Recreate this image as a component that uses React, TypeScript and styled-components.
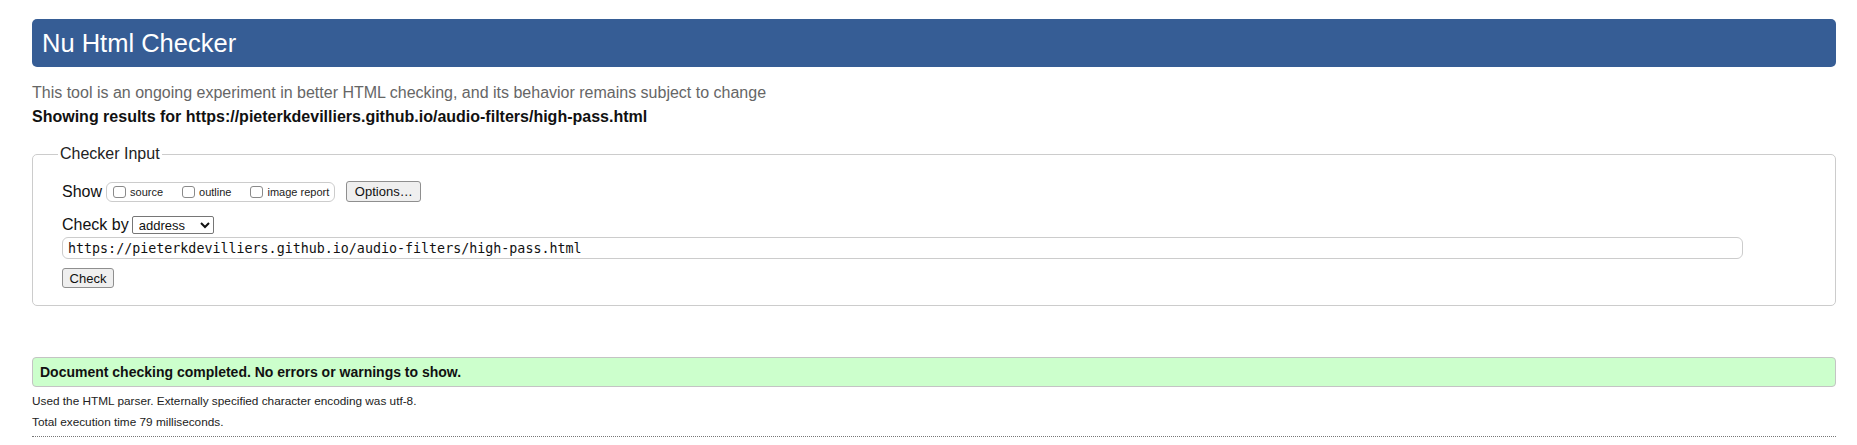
import React from "react";
import styled, { createGlobalStyle } from "styled-components";

const GlobalStyle = createGlobalStyle`
  html, body { margin: 0; padding: 0; background: #fff; }
  body { font-family: "Liberation Sans", Arial, sans-serif; color: #111; }
`;

const Page = styled.div`
  padding: 19px 21px 0 32px;
  display: flex;
  flex-direction: column;
`;

const Header = styled.h1`
  margin: 0;
  height: 48px;
  display: flex;
  align-items: center;
  padding: 0 10px;
  background: #365d95;
  color: #fff;
  font-size: 25.5px;
  font-weight: normal;
  border-radius: 5px;
`;

const Intro = styled.p`
  margin: 17px 0 0;
  font-size: 16px;
  line-height: 18px;
  color: #666;
`;

const Showing = styled.p`
  margin: 6px 0 0;
  font-size: 16px;
  line-height: 18px;
  font-weight: bold;
  color: #111;
`;

const Fieldset = styled.fieldset`
  margin: 19px 0 0;
  padding: 18px 20px 17px 29px;
  border: 1px solid #ccc;
  border-radius: 5px;
  min-width: 0;
`;

const Legend = styled.legend`
  margin-left: -4px;
  padding: 0 2px;
  font-size: 16px;
  line-height: 18px;
  color: #222;
`;

const Row = styled.div<{ $h: number; $mt?: number }>`
  display: flex;
  align-items: center;
  height: ${(p) => p.$h}px;
  margin-top: ${(p) => p.$mt ?? 0}px;
`;

const Label = styled.span`
  font-size: 16px;
  line-height: 18px;
  color: #111;
  margin-right: 3px;
`;

const ShowBox = styled.div`
  display: flex;
  align-items: center;
  height: 18px;
  padding: 0 5px 0 6px;
  border: 1px solid #ccc;
  border-radius: 6px;
  gap: 19px;
  margin-left: 1px;
`;

const Option = styled.label`
  display: flex;
  align-items: center;
  gap: 4px;
  font-size: 11px;
  color: #222;
`;

const Box = styled.input`
  appearance: none;
  margin: 0;
  width: 13px;
  height: 12px;
  border: 1px solid #8a8a8a;
  border-radius: 3px;
  background: #fff;
`;

const Button = styled.button<{ $w: number }>`
  width: ${(p) => p.$w}px;
  height: 21px;
  padding: 0;
  font-family: "Liberation Sans", Arial, sans-serif;
  font-size: 13px;
  color: #111;
  background: #efefef;
  border: 1px solid #8f8f8f;
  border-radius: 3px;
`;

const OptionsButton = styled(Button)`
  margin-left: 11px;
`;

const Select = styled.select`
  width: 82px;
  height: 18px;
  padding: 0 0 0 2px;
  font-family: "Liberation Sans", Arial, sans-serif;
  font-size: 13px;
  color: #111;
  background: #fff;
  border: 1px solid #767676;
  border-radius: 2px;
`;

const UrlInput = styled.input`
  display: block;
  box-sizing: border-box;
  width: 1681px;
  height: 22px;
  margin-top: 3px;
  padding: 0 5px;
  font-family: "DejaVu Sans Mono", "Liberation Mono", monospace;
  font-size: 13.33px;
  color: #111;
  border: 1px solid #ccc;
  border-radius: 6px;
  outline: none;
`;

const CheckButton = styled(Button)`
  margin-top: 9px;
  height: 20px;
  display: block;
`;

const Success = styled.div`
  margin-top: 51px;
  box-sizing: border-box;
  height: 30px;
  display: flex;
  align-items: center;
  padding: 0 7px;
  background: #ccffcc;
  border: 1px solid #c4c4c4;
  border-radius: 4px;
  font-size: 14px;
  font-weight: bold;
  color: #111;
`;

const Details = styled.p`
  margin: 0;
  font-size: 11.8px;
  line-height: 21px;
  color: #222;
`;

const FirstDetail = styled(Details)`
  margin-top: 4px;
`;

const Divider = styled.hr`
  margin: 3px 0 0;
  border: 0;
  border-top: 1px dotted #777;
  height: 0;
`;

export default function App() {
  return (
    <>
      <GlobalStyle />
      <Page>
        <Header>Nu Html Checker</Header>
        <Intro>
          This tool is an ongoing experiment in better HTML checking, and its behavior remains subject to change
        </Intro>
        <Showing>
          Showing results for https://pieterkdevilliers.github.io/audio-filters/high-pass.html
        </Showing>
        <Fieldset>
          <Legend>Checker Input</Legend>
          <Row $h={21}>
            <Label>Show</Label>
            <ShowBox>
              <Option>
                <Box type="checkbox" />
                source
              </Option>
              <Option>
                <Box type="checkbox" />
                outline
              </Option>
              <Option>
                <Box type="checkbox" />
                image report
              </Option>
            </ShowBox>
            <OptionsButton $w={75} type="button">
              Options…
            </OptionsButton>
          </Row>
          <Row $h={18} $mt={14}>
            <Label>Check by</Label>
            <Select defaultValue="address">
              <option value="address">address</option>
              <option value="file">file upload</option>
              <option value="text">text input</option>
            </Select>
          </Row>
          <UrlInput
            type="text"
            defaultValue="https://pieterkdevilliers.github.io/audio-filters/high-pass.html"
          />
          <CheckButton $w={52} type="button">
            Check
          </CheckButton>
        </Fieldset>
        <Success>Document checking completed. No errors or warnings to show.</Success>
        <FirstDetail>Used the HTML parser. Externally specified character encoding was utf-8.</FirstDetail>
        <Details>Total execution time 79 milliseconds.</Details>
        <Divider />
      </Page>
    </>
  );
}
